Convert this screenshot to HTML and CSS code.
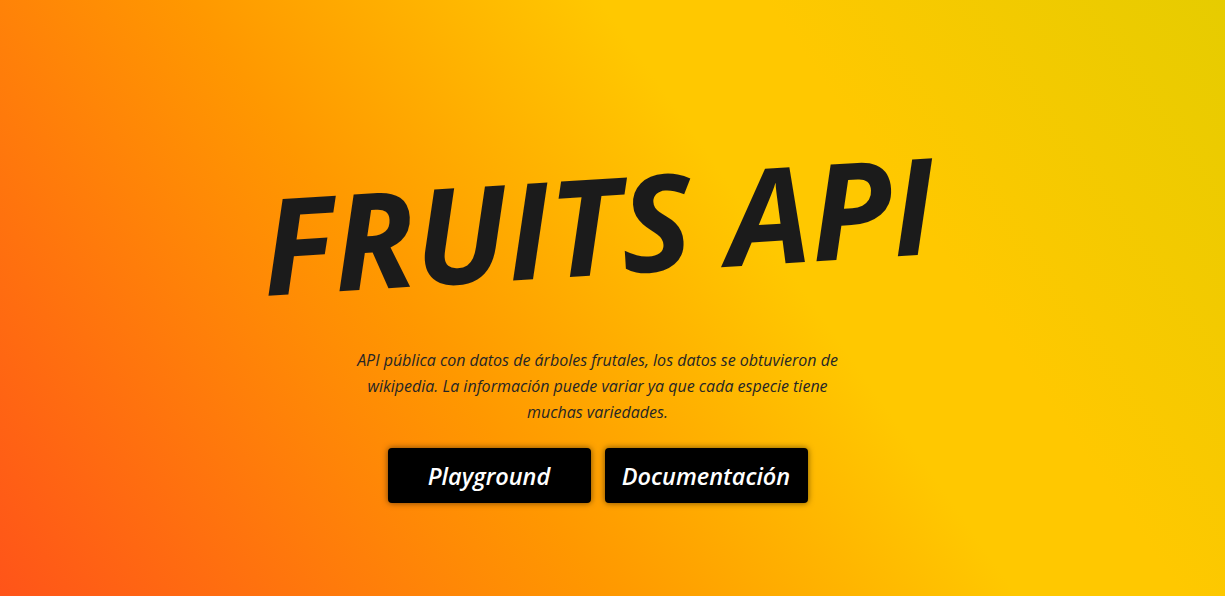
FILE: index.html
```html
<!DOCTYPE html>
<html lang="es">
<head>
<meta charset="utf-8">
<title>Fruits API</title>
<link rel="stylesheet" href="styles.css">
</head>
<body>
<main class="hero">
  <h1 class="title">FRUITS API</h1>
  <p class="lead">API pública con datos de árboles frutales, los datos se obtuvieron de wikipedia. La información puede variar ya que cada especie tiene muchas variedades.</p>
  <div class="actions">
    <a class="btn" href="#">Playground</a>
    <a class="btn" href="#">Documentación</a>
  </div>
</main>
</body>
</html>
```
FILE: styles.css
```css
* { box-sizing: border-box; }
html, body { margin: 0; height: 100%; }
body {
  font-family: "Open Sans", "Noto Sans", sans-serif;
  background: linear-gradient(55deg, #ff5419 0%, #ff9800 37%, #ffc800 62%, #ffc800 72%, #e6cc00 100%);
  overflow: hidden;
}
.hero {
  height: 100%;
  display: flex;
  flex-direction: column;
  align-items: center;
  padding-top: 156px;
  padding-right: 30px;
}
.title {
  margin: 0;
  font-size: 134px;
  font-weight: 700;
  font-style: italic;
  line-height: 1;
  color: #1b1b1b;
  letter-spacing: 0;
  transform: rotate(-3.6deg);
  white-space: nowrap;
}
.lead {
  margin: 57px 0 0;
  max-width: 500px;
  text-align: center;
  font-size: 16px;
  font-style: italic;
  font-weight: 500;
  line-height: 26px;
  color: #262626;
}
.actions {
  margin-top: 23px;
  display: flex;
  gap: 14px;
}
.btn {
  width: 203px;
  height: 55px;
  display: flex;
  align-items: center;
  justify-content: center;
  background: #000;
  color: #fff;
  border-radius: 4px;
  box-shadow: 0 0 6px rgba(0, 0, 0, 0.55);
  text-decoration: none;
  font-size: 23.5px;
  font-weight: 600;
  font-style: italic;
}
```
